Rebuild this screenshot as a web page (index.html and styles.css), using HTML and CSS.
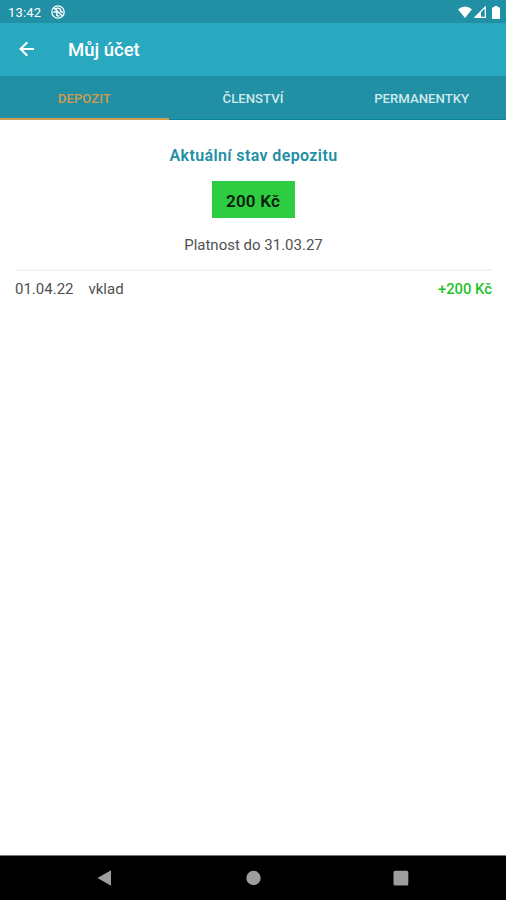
FILE: index.html
```
<!DOCTYPE html>
<html lang="cs">
<head>
  <meta charset="UTF-8" />
  <meta name="viewport" content="width=device-width, initial-scale=1.0" />
  <title>Můj účet</title>
  <link rel="stylesheet" href="styles.css">
</head>
<body>
  <div class="statusbar">
    <span class="time">13:42</span>
    <svg class="app-icon" width="14" height="14" viewBox="0 0 14 14" fill="none" stroke="#fff">
      <circle cx="7" cy="7" r="6.200" stroke-width="1.300" />
      <path d="M3 3l8.500 8M4.500 4C6 2.600 9 3 9.600 4.800S8.500 6.800 12 7M2.500 7.500c2-1.500 4-.5 3.500 1S5 11 8.500 11" stroke-width="1.500" />
    </svg>
    <div class="indicators">
      <svg width="14" height="12" viewBox="0 0 14 12"><path d="M0 3.200Q7-2.400 14 3.200L7 12z" fill="#fff" /></svg>
      <svg width="12" height="12" viewBox="0 0 12 12">
        <path d="M11.300 1v10.400H1z" fill="none" stroke="#fff" stroke-width="1.200" />
        <path d="M7 5.300V11.500H1z" fill="#fff" />
      </svg>
      <svg width="8" height="13" viewBox="0 0 8 13"><path d="M2.300 0h3.400v1.300H7a1 1 0 0 1 1 1V12a1 1 0 0 1-1 1H1a1 1 0 0 1-1-1V2.300a1 1 0 0 1 1-1h1.300z" fill="#fff" /></svg>
    </div>
  </div>

  <header class="toolbar">
    <svg width="16" height="16" viewBox="0 0 16 16" fill="none" stroke="#fff" stroke-width="2">
      <path d="M15 8H2M8.300 1.200L1.500 8l6.800 6.800" />
    </svg>
    <h1>Můj účet</h1>
  </header>

  <nav class="tabs">
    <a class="tab active">DEPOZIT</a>
    <a class="tab">ČLENSTVÍ</a>
    <a class="tab">PERMANENTKY</a>
  </nav>

  <main>
    <h2>Aktuální stav depozitu</h2>
    <div class="amount">200 Kč</div>
    <p class="validity">Platnost do 31.03.27</p>
    <div class="row">
      <span class="date">01.04.22</span>
      <span>vklad</span>
      <span class="plus">+200 Kč</span>
    </div>
  </main>

  <footer class="navbar">
    <svg width="506" height="44" viewBox="0 0 506 44" fill="#9e9e9e">
      <path d="M97.500 22L111 14.200v15.600z" />
      <circle cx="253.500" cy="22" r="7.200" />
      <rect x="393.500" y="14.800" width="14.800" height="14.800" rx="1.500" />
    </svg>
  </footer>
</body>
</html>
```
FILE: styles.css
```
* { box-sizing: border-box; margin: 0; padding: 0; }
body {
  font-family: Roboto, sans-serif;
  background: #fff;
  color: #505050;
  height: 900px;
  display: flex;
  flex-direction: column;
  overflow: hidden;
}
svg { display: block; }
.statusbar {
  height: 23px;
  background: #218fa4;
  color: #fff;
  display: flex;
  align-items: center;
  padding: 1px 6px 0 8px;
}
.time { font-size: 13px; letter-spacing: 0.2px; }
.app-icon { margin-left: 10px; }
.indicators { margin-left: auto; display: flex; align-items: center; gap: 2px; }
.indicators svg:last-child { margin-left: 4px; }
.toolbar {
  height: 53px;
  background: #29a9c0;
  color: #fff;
  display: flex;
  align-items: center;
  padding-left: 19px;
}
.toolbar svg { margin-top: -1px; }
.toolbar h1 { font-size: 18.5px; font-weight: 500; margin-left: 33px; padding-top: 1px; }
.tabs {
  height: 44px;
  background: #218fa4;
  border-bottom: 1px solid #08849b;
  display: flex;
}
.tab {
  flex: 1;
  height: 44px;
  display: flex;
  align-items: center;
  justify-content: center;
  padding-top: 3px;
  border-bottom: 2px solid transparent;
  color: #cfe9ed;
  font-size: 13.2px;
  font-weight: 500;
}
.tab.active { color: #cf9c50; border-bottom-color: #cf9c50; }
main {
  flex: 1;
  padding: 26px 14px 0 15px;
  display: flex;
  flex-direction: column;
  align-items: center;
}
h2 { font-size: 16px; line-height: 20px; font-weight: 600; letter-spacing: 0.38px; color: #218fa4; }
.amount {
  width: 83px;
  height: 37px;
  margin: 15px 1px 0 0;
  line-height: 40px;
  text-align: center;
  background: #2ecc40;
  color: #0b200d;
  font-size: 17px;
  font-weight: 600;
  letter-spacing: 0.2px;
}
.validity { margin-top: 17px; font-size: 15px; line-height: 20px; }
.row {
  align-self: stretch;
  display: flex;
  margin-top: 14px;
  padding-top: 8px;
  border-top: 2px solid #f4f4f4;
  font-size: 15px;
  line-height: 20px;
}
.date { width: 73.5px; }
.plus { margin-left: auto; color: #1fc32b; font-weight: 500; font-size: 14.8px; }
.navbar { height: 45px; background: #000; border-top: 1px solid #777; }
```
